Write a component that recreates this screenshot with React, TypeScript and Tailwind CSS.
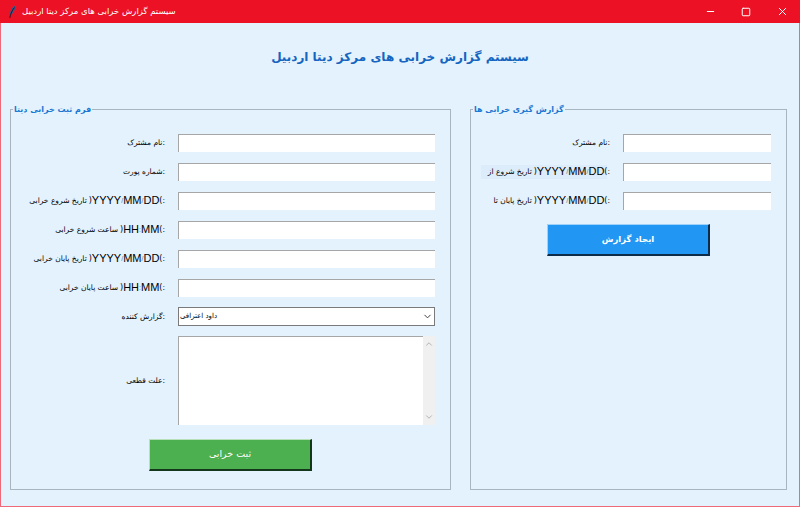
import React from 'react';
import { ChevronDown, ChevronUp, Minus, Square, X } from 'lucide-react';

const arabicFont = "font-['DejaVu_Sans','Liberation_Sans',sans-serif]";

function FormatHint({ format }: { format: string }) {
  return (
    <span className="flex items-center ml-[2px]">
      <span className="text-[8px]">)</span>
      <span className="flex items-center mt-[-2px] font-['Liberation_Sans',sans-serif] text-[11px] leading-none">
        {format.split(/([/:])/).map((part, i) =>
          part === '/' || part === ':' ? (
            <span key={i} className="text-[7px] text-[#667788]">{part}</span>
          ) : (
            <span key={i}>{part}</span>
          )
        )}
      </span>
      <span className="text-[8px]">(</span>
    </span>
  );
}

function FieldLabel({ text, format, width, ghost }: { text: string; format?: string; width: string; ghost?: boolean }) {
  return (
    <div className={`${width} flex justify-end items-center text-black text-[7.5px] whitespace-nowrap`} dir="ltr">
      <span className={ghost ? 'flex items-center h-[14px] bg-[#dcecfb] pl-[7px]' : 'flex items-center'}>
        <span>{text}</span>
        {format && <FormatHint format={format} />}
      </span>
      <span>:</span>
    </div>
  );
}

function TextRow({ text, format, labelWidth, inputWidth, ghost }: { text: string; format?: string; labelWidth: string; inputWidth: string; ghost?: boolean }) {
  return (
    <div className="flex items-center h-[18px]">
      <FieldLabel text={text} format={format} width={labelWidth} ghost={ghost} />
      <input
        type="text"
        className={`${inputWidth} ml-[13px] h-[18px] bg-white border-t border-l border-[#a6a6a6] outline-none`}
      />
    </div>
  );
}

function Frame({ title, className, children }: { title: string; className: string; children: React.ReactNode }) {
  return (
    <fieldset className={`${className} box-border border border-[#a9b6bf] h-[387px]`}>
      <legend className="ml-[2px] px-[1px] h-[12px] text-[8px] leading-[14px] font-bold text-[#1976d2]">{title}</legend>
      {children}
    </fieldset>
  );
}

export default function App() {
  return (
    <div className={`w-[800px] h-[507px] flex flex-col overflow-hidden ${arabicFont}`}>
      <div className="h-[23px] shrink-0 bg-[#ec1125] flex items-center pl-[9px] text-white">
        <svg width="7" height="13" viewBox="0 0 7 13" className="shrink-0">
          <path d="M6.8 0.3C4 1.2 1.3 4.5 0.9 9.3L2 10C4.8 8 6.5 4 6.8 0.3Z" fill="#3a5a8c" />
          <path d="M5.5 2.5C3.8 4.5 2.3 7 1.4 10.5L0.8 12.8" stroke="#101528" strokeWidth="0.9" fill="none" />
        </svg>
        <span className="ml-[6px] text-[8.5px] leading-none">سیستم گزارش خرابی های مرکز دیتا اردبیل</span>
        <div className="ml-auto flex items-center h-full">
          <div className="w-[35px] flex justify-center"><Minus size={11} strokeWidth={1} absoluteStrokeWidth /></div>
          <div className="w-[36px] flex justify-center"><Square size={10} strokeWidth={1} absoluteStrokeWidth /></div>
          <div className="w-[36px] flex justify-center"><X size={13} strokeWidth={1} absoluteStrokeWidth /></div>
        </div>
      </div>

      <div className="flex-1 min-h-0 bg-[#e3f2fd] border-x border-b border-[#ee6a78] flex flex-col pl-[9px]">
        <h1 className="h-[68px] mb-[12px] shrink-0 pr-[9px] flex items-center justify-center text-[12px] font-bold text-[#1565c0]">
          سیستم گزارش خرابی های مرکز دیتا اردبیل
        </h1>

        <div className="flex gap-[19px]">
          <Frame title="فرم ثبت خرابی دیتا" className="w-[441px]">
            <div className="flex flex-col gap-[11px] pt-[19px]">
              <TextRow text="نام مشترک" labelWidth="w-[154px]" inputWidth="w-[257px]" />
              <TextRow text="شماره پورت" labelWidth="w-[154px]" inputWidth="w-[257px]" />
              <TextRow text="تاریخ شروع خرابی" format="YYYY/MM/DD" labelWidth="w-[154px]" inputWidth="w-[257px]" />
              <TextRow text="ساعت شروع خرابی" format="HH:MM" labelWidth="w-[154px]" inputWidth="w-[257px]" />
              <TextRow text="تاریخ پایان خرابی" format="YYYY/MM/DD" labelWidth="w-[154px]" inputWidth="w-[257px]" />
              <TextRow text="ساعت پایان خرابی" format="HH:MM" labelWidth="w-[154px]" inputWidth="w-[257px]" />

              <div className="flex items-center h-[19px] mt-[-1px]">
                <FieldLabel text="گزارش کننده" width="w-[154px]" />
                <div className="relative ml-[13px] w-[257px] h-[19px]">
                  <select className="block w-full h-full appearance-none bg-white border border-[#7a7a7a] pl-[1px] text-[7px] text-black outline-none" defaultValue="davood">
                    <option value="davood">داود اعترافی</option>
                  </select>
                  <ChevronDown size={11} strokeWidth={1} absoluteStrokeWidth className="absolute right-[2px] top-[4px] text-[#444] pointer-events-none" />
                </div>
              </div>

              <div className="flex items-center h-[89px] mt-[-1px]">
                <FieldLabel text="علت قطعی" width="w-[154px]" />
                <div className="ml-[13px] w-[257px] h-full flex">
                  <textarea className="flex-1 min-w-0 h-full resize-none overflow-hidden bg-white border-t border-l border-[#a6a6a6] outline-none" />
                  <div className="w-[12px] h-full bg-[#f0f0f0] flex flex-col justify-between items-center py-[3px] text-[#b4b4b4]">
                    <ChevronUp size={10} strokeWidth={1} absoluteStrokeWidth />
                    <ChevronDown size={10} strokeWidth={1} absoluteStrokeWidth />
                  </div>
                </div>
              </div>
            </div>
            <button className="mt-[14px] ml-[138px] w-[163px] h-[32px] flex items-center justify-center bg-[#4caf50] border-t border-l border-[#b7e0b9] border-r-2 border-b-2 border-r-[#14361a] border-b-[#14361a] text-white text-[9.5px]">
              ثبت خرابی
            </button>
          </Frame>

          <Frame title="گزارش گیری خرابی ها" className="w-[317px]">
            <div className="flex flex-col gap-[11px] pt-[19px]">
              <TextRow text="نام مشترک" labelWidth="w-[139px]" inputWidth="w-[148px]" />
              <TextRow text="تاریخ شروع از" format="YYYY/MM/DD" labelWidth="w-[139px]" inputWidth="w-[148px]" ghost />
              <TextRow text="تاریخ پایان تا" format="YYYY/MM/DD" labelWidth="w-[139px]" inputWidth="w-[148px]" />
            </div>
            <button className="mt-[14px] ml-[76px] w-[163px] h-[32px] flex items-center justify-center bg-[#2196f3] border-t border-l border-[#9fd2f9] border-r-2 border-b-2 border-r-[#0d2c4a] border-b-[#0d2c4a] text-white text-[8.5px] font-bold">
              ایجاد گزارش
            </button>
          </Frame>
        </div>
      </div>
    </div>
  );
}
